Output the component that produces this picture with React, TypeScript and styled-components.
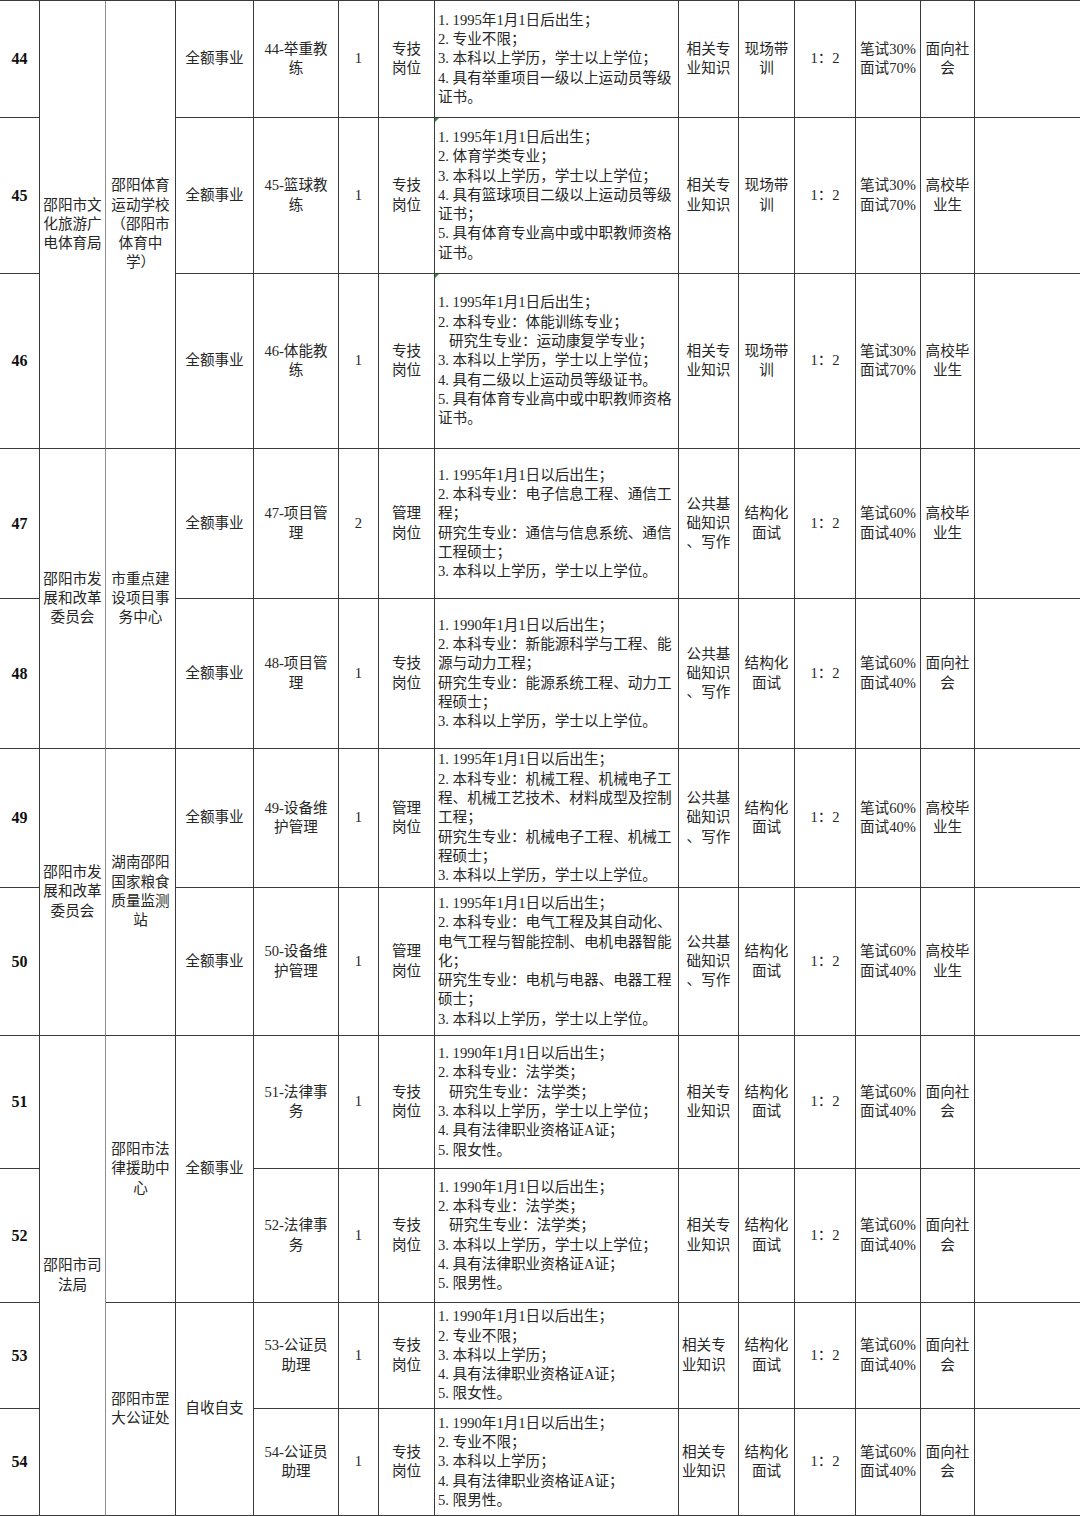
import React from 'react';
import styled, { createGlobalStyle, css } from 'styled-components';

const GlobalStyle = createGlobalStyle`
  html, body {
    margin: 0;
    padding: 0;
    background: #fff;
  }
  body {
    font-family: "Liberation Serif", "Noto Sans CJK SC", serif;
    color: #262626;
  }
`;

interface Job {
    no: string
    code: string[]
    count: string
    post: string[]
    req: string[]
    subject: string[]
    method: string[]
    weight: [string, string]
    target: string[]
    mark?: boolean
    leftSubject?: boolean
}

interface Group {
    start: number
    span: number
    lines: string[]
}

const jobs: Job[] = [
    {
        no: '44', code: ['44-举重教', '练'], count: '1', post: ['专技', '岗位'],
        req: [
            '1.1995年1月1日后出生；',
            '2.专业不限；',
            '3.本科以上学历，学士以上学位；',
            '4.具有举重项目一级以上运动员等级',
            '证书。',
        ],
        subject: ['相关专', '业知识'], method: ['现场带', '训'], weight: ['30', '70'], target: ['面向社', '会'],
    },
    {
        no: '45', code: ['45-篮球教', '练'], count: '1', post: ['专技', '岗位'],
        req: [
            '1.1995年1月1日后出生；',
            '2.体育学类专业；',
            '3.本科以上学历，学士以上学位；',
            '4.具有篮球项目二级以上运动员等级',
            '证书；',
            '5.具有体育专业高中或中职教师资格',
            '证书。',
        ],
        subject: ['相关专', '业知识'], method: ['现场带', '训'], weight: ['30', '70'], target: ['高校毕', '业生'], mark: true,
    },
    {
        no: '46', code: ['46-体能教', '练'], count: '1', post: ['专技', '岗位'],
        req: [
            '1.1995年1月1日后出生；',
            '2.本科专业：体能训练专业；',
            '\u00a0\u00a0\u00a0研究生专业：运动康复学专业；',
            '3.本科以上学历，学士以上学位；',
            '4.具有二级以上运动员等级证书。',
            '5.具有体育专业高中或中职教师资格',
            '证书。',
        ],
        subject: ['相关专', '业知识'], method: ['现场带', '训'], weight: ['30', '70'], target: ['高校毕', '业生'], mark: true,
    },
    {
        no: '47', code: ['47-项目管', '理'], count: '2', post: ['管理', '岗位'],
        req: [
            '1.1995年1月1日以后出生；',
            '2.本科专业：电子信息工程、通信工',
            '程；',
            '研究生专业：通信与信息系统、通信',
            '工程硕士；',
            '3.本科以上学历，学士以上学位。',
        ],
        subject: ['公共基', '础知识', '、写作'], method: ['结构化', '面试'], weight: ['60', '40'], target: ['高校毕', '业生'],
    },
    {
        no: '48', code: ['48-项目管', '理'], count: '1', post: ['专技', '岗位'],
        req: [
            '1.1990年1月1日以后出生；',
            '2.本科专业：新能源科学与工程、能',
            '源与动力工程；',
            '研究生专业：能源系统工程、动力工',
            '程硕士；',
            '3.本科以上学历，学士以上学位。',
        ],
        subject: ['公共基', '础知识', '、写作'], method: ['结构化', '面试'], weight: ['60', '40'], target: ['面向社', '会'],
    },
    {
        no: '49', code: ['49-设备维', '护管理'], count: '1', post: ['管理', '岗位'],
        req: [
            '1.1995年1月1日以后出生；',
            '2.本科专业：机械工程、机械电子工',
            '程、机械工艺技术、材料成型及控制',
            '工程；',
            '研究生专业：机械电子工程、机械工',
            '程硕士；',
            '3.本科以上学历，学士以上学位。',
        ],
        subject: ['公共基', '础知识', '、写作'], method: ['结构化', '面试'], weight: ['60', '40'], target: ['高校毕', '业生'],
    },
    {
        no: '50', code: ['50-设备维', '护管理'], count: '1', post: ['管理', '岗位'],
        req: [
            '1.1995年1月1日以后出生；',
            '2.本科专业：电气工程及其自动化、',
            '电气工程与智能控制、电机电器智能',
            '化；',
            '研究生专业：电机与电器、电器工程',
            '硕士；',
            '3.本科以上学历，学士以上学位。',
        ],
        subject: ['公共基', '础知识', '、写作'], method: ['结构化', '面试'], weight: ['60', '40'], target: ['高校毕', '业生'],
    },
    {
        no: '51', code: ['51-法律事', '务'], count: '1', post: ['专技', '岗位'],
        req: [
            '1.1990年1月1日以后出生；',
            '2.本科专业：法学类；',
            '\u00a0\u00a0\u00a0研究生专业：法学类；',
            '3.本科以上学历，学士以上学位；',
            '4.具有法律职业资格证A证；',
            '5.限女性。',
        ],
        subject: ['相关专', '业知识'], method: ['结构化', '面试'], weight: ['60', '40'], target: ['面向社', '会'],
    },
    {
        no: '52', code: ['52-法律事', '务'], count: '1', post: ['专技', '岗位'],
        req: [
            '1.1990年1月1日以后出生；',
            '2.本科专业：法学类；',
            '\u00a0\u00a0\u00a0研究生专业：法学类；',
            '3.本科以上学历，学士以上学位；',
            '4.具有法律职业资格证A证；',
            '5.限男性。',
        ],
        subject: ['相关专', '业知识'], method: ['结构化', '面试'], weight: ['60', '40'], target: ['面向社', '会'],
    },
    {
        no: '53', code: ['53-公证员', '助理'], count: '1', post: ['专技', '岗位'],
        req: [
            '1.1990年1月1日以后出生；',
            '2.专业不限；',
            '3.本科以上学历；',
            '4.具有法律职业资格证A证；',
            '5.限女性。',
        ],
        subject: ['相关专', '业知识'], method: ['结构化', '面试'], weight: ['60', '40'], target: ['面向社', '会'], leftSubject: true,
    },
    {
        no: '54', code: ['54-公证员', '助理'], count: '1', post: ['专技', '岗位'],
        req: [
            '1.1990年1月1日以后出生；',
            '2.专业不限；',
            '3.本科以上学历；',
            '4.具有法律职业资格证A证；',
            '5.限男性。',
        ],
        subject: ['相关专', '业知识'], method: ['结构化', '面试'], weight: ['60', '40'], target: ['面向社', '会'], leftSubject: true,
    },
];

const departments: Group[] = [
    { start: 0, span: 3, lines: ['邵阳市文', '化旅游广', '电体育局'] },
    { start: 3, span: 2, lines: ['邵阳市发', '展和改革', '委员会'] },
    { start: 5, span: 2, lines: ['邵阳市发', '展和改革', '委员会'] },
    { start: 7, span: 4, lines: ['邵阳市司', '法局'] },
];

const units: Group[] = [
    { start: 0, span: 3, lines: ['邵阳体育', '运动学校', '（邵阳市', '体育中', '学）'] },
    { start: 3, span: 2, lines: ['市重点建', '设项目事', '务中心'] },
    { start: 5, span: 2, lines: ['湖南邵阳', '国家粮食', '质量监测', '站'] },
    { start: 7, span: 2, lines: ['邵阳市法', '律援助中', '心'] },
    { start: 9, span: 2, lines: ['邵阳市罡', '大公证处'] },
];

const funds: Group[] = [
    ...[0, 1, 2, 3, 4, 5, 6].map((i) => ({ start: i, span: 1, lines: ['全额事业'] })),
    { start: 7, span: 2, lines: ['全额事业'] },
    { start: 9, span: 2, lines: ['自收自支'] },
];

const rowHeights = [117, 156, 175, 150, 150, 139, 148, 133, 134, 106, 107];

const Sheet = styled.div`
  display: grid;
  width: 1080px;
  grid-template-columns: 40px 66px 70px 78px 85px 40px 56px 244px 60px 56px 61px 65px 54px 105px;
  grid-template-rows: ${rowHeights.map((h) => `${h}px`).join(' ')};
  border-top: 1px solid #3a3a3a;
  font-size: 14.6px;
  line-height: 19.3px;
`;

const Cell = styled.div<{ $span?: number; $soft?: boolean; $left?: boolean; $last?: boolean }>`
  box-sizing: border-box;
  display: flex;
  flex-direction: column;
  justify-content: center;
  align-items: ${(p) => (p.$left ? 'flex-start' : 'center')};
  padding: ${(p) => (p.$left ? '0 0 0 3px' : '0')};
  text-align: center;
  border-bottom: 1px solid #3a3a3a;
  border-right: ${(p) => (p.$last ? 'none' : p.$soft ? '1px solid #8f8f8f' : '1px solid #3a3a3a')};
  grid-row: span ${(p) => p.$span ?? 1};
  overflow: hidden;
`;

const NumCell = styled(Cell)`
  font-weight: 700;
  font-size: 16px;
  color: #111;
`;

const ReqCell = styled(Cell)<{ $mark?: boolean }>`
  position: relative;
  align-items: flex-start;
  text-align: left;
  padding-left: 3px;

  ${(p) =>
        p.$mark &&
        css`
      &::before {
        content: '';
        position: absolute;
        top: 0;
        left: 0;
        border-top: 4px solid #2e8b2e;
        border-right: 4px solid transparent;
      }
    `}
`;

const Line = styled.span`
  display: block;
  white-space: nowrap;
`;

// the numbered prefix ("1.") is half-width per glyph in the source font
const Prefix = styled.span`
  display: inline-block;
  width: 1em;
`;

const Lines: React.FC<{ lines: string[] }> = ({ lines }) => (
    <>
        {lines.map((l, i) => {
            const m = l.match(/^(\d\.)(.*)$/);
            return (
                <Line key={i}>
                    {m ? (
                        <>
                            <Prefix>{m[1]}</Prefix>
                            {m[2]}
                        </>
                    ) : (
                        l
                    )}
                </Line>
            );
        })}
    </>
);

const App: React.FC = () => {
    return (
        <>
            <GlobalStyle />
            <Sheet>
                {jobs.map((job, i) => {
                    const dept = departments.find((g) => g.start === i);
                    const unit = units.find((g) => g.start === i);
                    const fund = funds.find((g) => g.start === i);
                    return (
                        <React.Fragment key={job.no}>
                            <NumCell>{job.no}</NumCell>
                            {dept && (
                                <Cell $span={dept.span} $soft>
                                    <Lines lines={dept.lines} />
                                </Cell>
                            )}
                            {unit && (
                                <Cell $span={unit.span}>
                                    <Lines lines={unit.lines} />
                                </Cell>
                            )}
                            {fund && (
                                <Cell $span={fund.span}>
                                    <Lines lines={fund.lines} />
                                </Cell>
                            )}
                            <Cell><Lines lines={job.code} /></Cell>
                            <Cell>{job.count}</Cell>
                            <Cell><Lines lines={job.post} /></Cell>
                            <ReqCell $mark={job.mark}><Lines lines={job.req} /></ReqCell>
                            <Cell $left={job.leftSubject}><Lines lines={job.subject} /></Cell>
                            <Cell><Lines lines={job.method} /></Cell>
                            <Cell>1：2</Cell>
                            <Cell>
                                <Lines lines={[`笔试${job.weight[0]}%`, `面试${job.weight[1]}%`]} />
                            </Cell>
                            <Cell><Lines lines={job.target} /></Cell>
                            <Cell $last />
                        </React.Fragment>
                    );
                })}
            </Sheet>
        </>
    );
};

export default App;
